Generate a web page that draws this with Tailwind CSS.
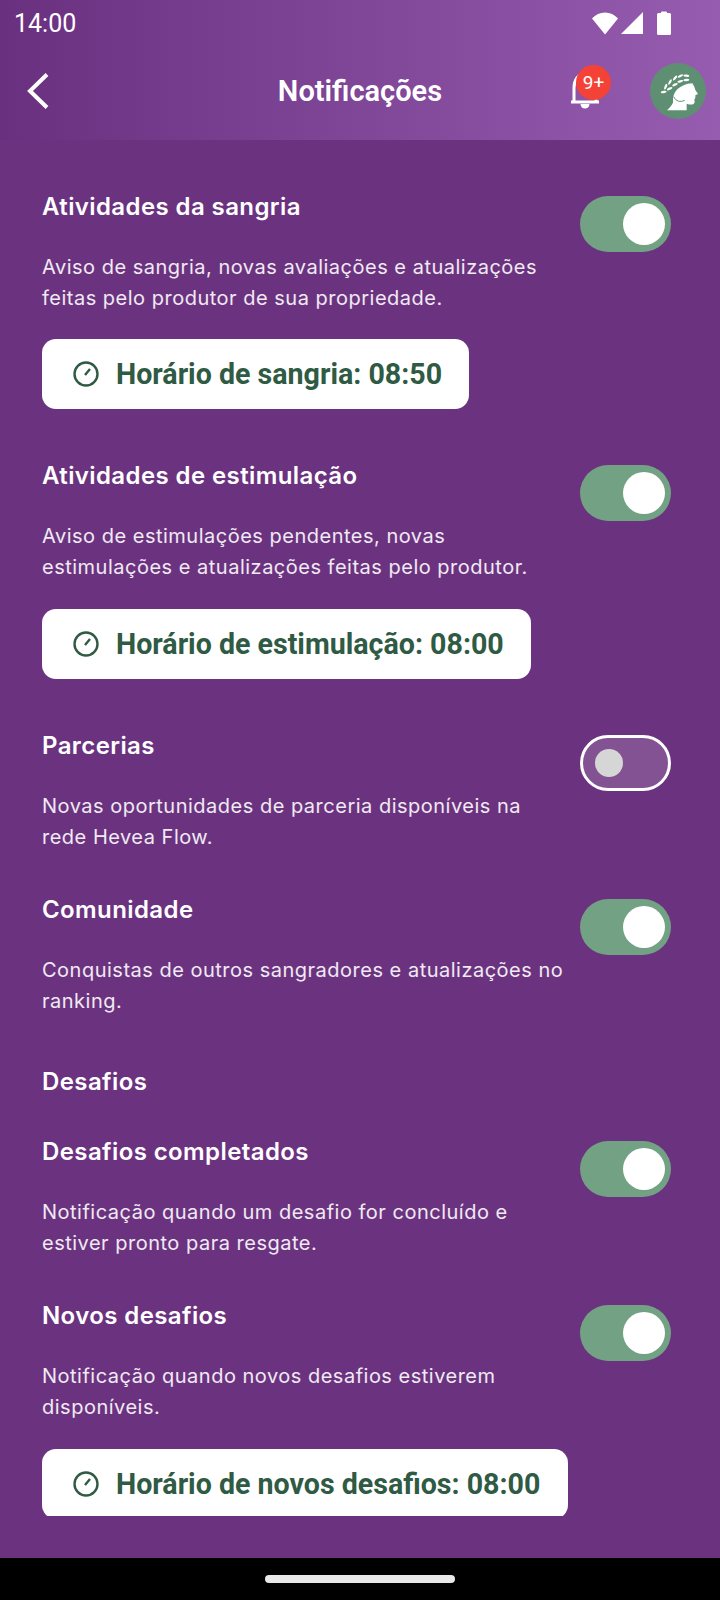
<!DOCTYPE html>
<html lang="pt-BR">
<head>
    <meta charset="UTF-8">
    <meta name="viewport" content="width=device-width, initial-scale=1.0">
    <title>Notificações</title>
    <script src="https://cdn.jsdelivr.net/npm/@tailwindcss/browser@4"></script>
</head>
<body class="bg-black">
<div class="w-[720px] h-[1600px] flex flex-col bg-black text-white font-['Inter',sans-serif] overflow-hidden">
    <!-- app bar -->
    <header class="h-[140px] shrink-0 bg-gradient-to-r from-[#6a3080] to-[#965cb0] font-['Roboto',sans-serif]">
        <div class="h-[46px] pl-[14px] pr-[49px] flex items-center justify-between">
            <span class="text-[25px] leading-none font-normal">14:00</span>
            <div class="flex items-center gap-[3px]">
                <svg width="26" height="23" viewBox="0 0 26 23"><path d="M0 6.5C3.500 2.500 8 0.500 13 0.500S22.500 2.500 26 6.500L13 22.500Z" fill="#fff"/></svg>
                <svg width="22" height="22" viewBox="0 0 22 22"><path d="M22 0V22H0Z" fill="#fff"/></svg>
                <svg width="14" height="24" viewBox="0 0 14 24" class="ml-[11px]"><path d="M4 2V1.500Q4 0.500 5 0.500H9Q10 0.500 10 1.500V2H12.500Q14 2 14 3.500V22.500Q14 24 12.500 24H1.500Q0 24 0 22.500V3.500Q0 2 1.500 2Z" fill="#fff"/></svg>
            </div>
        </div>
        <div class="h-[90px] relative flex items-center justify-center">
            <svg class="absolute left-[26px] top-[26px]" width="24" height="38" viewBox="0 0 24 38"><path d="M21 2.500L4 19L21 35.500" fill="none" stroke="#fff" stroke-width="4"/></svg>
            <h1 class="text-[29px] leading-none font-semibold">Notificações</h1>
            <div class="absolute left-[566px] top-[16px] w-[50px] h-[50px]">
                <svg class="absolute left-[2px] top-[8px]" width="34" height="40" viewBox="0 0 34 40"><path d="M3 32H31M6 32V18C6 10 10 4 17 4S28 10 28 18V32" fill="none" stroke="#fff" stroke-width="3"/><path d="M12.500 34H21.500C21.500 40 12.500 40 12.500 34Z" fill="#fff"/></svg>
                <div class="absolute left-[10px] top-[3px] w-[35px] h-[35px] rounded-full bg-[#f44336] flex items-center justify-center text-[19px] leading-none font-normal">9+</div>
            </div>
            <div class="absolute left-[650px] top-[17px] w-[56px] h-[56px] rounded-full bg-[#5f8f72]">
                <svg width="56" height="56" viewBox="15 15 168 168">
                    <path d="M92 100C102 86 125 76 142 76L148 86L151 96L159 108L151 112L151 120L148 124L149 132C147 141 138 141 125 137L125 157L66 157C77 146 87 136 84 126C83 118 87 108 92 100Z" fill="#fff"/>
                    <path d="M86 116C94 131 105 133 119 127" fill="none" stroke="#5f8f72" stroke-width="3"/>
                    <g fill="#fff">
                        <ellipse cx="56" cy="102" rx="9" ry="3.500" transform="rotate(-10 56 102)"/>
                        <ellipse cx="62" cy="86" rx="9" ry="3.500" transform="rotate(-65 62 86)"/>
                        <ellipse cx="74" cy="92" rx="9" ry="3.500" transform="rotate(-25 74 92)"/>
                        <ellipse cx="75" cy="72" rx="9" ry="3.500" transform="rotate(-60 75 72)"/>
                        <ellipse cx="90" cy="80" rx="9" ry="3.500" transform="rotate(-25 90 80)"/>
                        <ellipse cx="90" cy="60" rx="9" ry="3.500" transform="rotate(-50 90 60)"/>
                        <ellipse cx="106" cy="70" rx="9" ry="3.500" transform="rotate(-15 106 70)"/>
                        <ellipse cx="106" cy="54" rx="9" ry="3.500" transform="rotate(-25 106 54)"/>
                        <ellipse cx="124" cy="66" rx="9" ry="3.500" transform="rotate(-5 124 66)"/>
                        <ellipse cx="124" cy="53" rx="9" ry="3.500" transform="rotate(5 124 53)"/>
                    </g>
                </svg>
            </div>
        </div>
    </header>

    <main class="h-[1418px] shrink-0 bg-[#6b3280]">
        <div class="h-[1376px] overflow-hidden pl-[42px] pr-[49px] pt-[52px]">
            <!-- Atividades da sangria -->
            <section class="flex justify-between items-start">
                <div class="w-[525px]">
                    <h2 class="mt-[1px] text-[24px] leading-[28px] font-semibold tracking-[0.4px]">Atividades da sangria</h2>
                    <p class="mt-[31px] text-[20px] leading-[31px] tracking-[0.5px] text-white/90">Aviso de sangria, novas avaliações e atualizações feitas pelo produtor de sua propriedade.</p>
                </div>
                <div class="mt-[4px] w-[91px] h-[56px] rounded-full bg-[#72a283] flex items-center justify-end pr-[6px]"><span class="w-[42px] h-[42px] rounded-full bg-white"></span></div>
            </section>
            <div class="mt-[25px] w-[427px] h-[70px] rounded-[14px] bg-white flex items-center pl-[31px] gap-[17px] font-['Roboto',sans-serif] text-[#2f5a43] text-[28.6px] leading-none font-bold">
                <svg width="26" height="26" viewBox="0 0 26 26" fill="none" stroke="#2f5a43" stroke-width="2.400"><circle cx="13" cy="13" r="11.500"/><path d="M12 14L17 8"/></svg>
                <span>Horário de sangria: 08:50</span>
            </div>

            <!-- Atividades de estimulação -->
            <section class="mt-[52px] flex justify-between items-start">
                <div class="w-[525px]">
                    <h2 class="mt-[1px] text-[24px] leading-[28px] font-semibold tracking-[0.4px]">Atividades de estimulação</h2>
                    <p class="mt-[31px] text-[20px] leading-[31px] tracking-[0.5px] text-white/90">Aviso de estimulações pendentes, novas estimulações e atualizações feitas pelo produtor.</p>
                </div>
                <div class="mt-[4px] w-[91px] h-[56px] rounded-full bg-[#72a283] flex items-center justify-end pr-[6px]"><span class="w-[42px] h-[42px] rounded-full bg-white"></span></div>
            </section>
            <div class="mt-[26px] w-[489px] h-[70px] rounded-[14px] bg-white flex items-center pl-[31px] gap-[17px] font-['Roboto',sans-serif] text-[#2f5a43] text-[28.6px] leading-none font-bold">
                <svg width="26" height="26" viewBox="0 0 26 26" fill="none" stroke="#2f5a43" stroke-width="2.400"><circle cx="13" cy="13" r="11.500"/><path d="M12 14L17 8"/></svg>
                <span>Horário de estimulação: 08:00</span>
            </div>

            <!-- Parcerias -->
            <section class="mt-[52px] flex justify-between items-start">
                <div class="w-[525px]">
                    <h2 class="mt-[1px] text-[24px] leading-[28px] font-semibold tracking-[0.4px]">Parcerias</h2>
                    <p class="mt-[31px] text-[20px] leading-[31px] tracking-[0.5px] text-white/90">Novas oportunidades de parceria disponíveis na rede Hevea Flow.</p>
                </div>
                <div class="mt-[4px] w-[91px] h-[56px] rounded-full bg-[#835292] border-[3px] border-white flex items-center pl-[12px]"><span class="w-[28px] h-[28px] rounded-full bg-[#d6d6d6]"></span></div>
            </section>

            <!-- Comunidade -->
            <section class="mt-[42px] flex justify-between items-start">
                <div class="w-[525px]">
                    <h2 class="mt-[1px] text-[24px] leading-[28px] font-semibold tracking-[0.4px]">Comunidade</h2>
                    <p class="mt-[31px] text-[20px] leading-[31px] tracking-[0.5px] text-white/90">Conquistas de outros sangradores e atualizações no ranking.</p>
                </div>
                <div class="mt-[4px] w-[91px] h-[56px] rounded-full bg-[#72a283] flex items-center justify-end pr-[6px]"><span class="w-[42px] h-[42px] rounded-full bg-white"></span></div>
            </section>

            <h2 class="mt-[51px] text-[24px] leading-[28px] font-semibold tracking-[0.4px]">Desafios</h2>

            <!-- Desafios completados -->
            <section class="mt-[41px] flex justify-between items-start">
                <div class="w-[525px]">
                    <h2 class="mt-[1px] text-[24px] leading-[28px] font-semibold tracking-[0.4px]">Desafios completados</h2>
                    <p class="mt-[31px] text-[20px] leading-[31px] tracking-[0.5px] text-white/90">Notificação quando um desafio for concluído e estiver pronto para resgate.</p>
                </div>
                <div class="mt-[4px] w-[91px] h-[56px] rounded-full bg-[#72a283] flex items-center justify-end pr-[6px]"><span class="w-[42px] h-[42px] rounded-full bg-white"></span></div>
            </section>

            <!-- Novos desafios -->
            <section class="mt-[42px] flex justify-between items-start">
                <div class="w-[525px]">
                    <h2 class="mt-[1px] text-[24px] leading-[28px] font-semibold tracking-[0.4px]">Novos desafios</h2>
                    <p class="mt-[31px] text-[20px] leading-[31px] tracking-[0.5px] text-white/90">Notificação quando novos desafios estiverem disponíveis.</p>
                </div>
                <div class="mt-[4px] w-[91px] h-[56px] rounded-full bg-[#72a283] flex items-center justify-end pr-[6px]"><span class="w-[42px] h-[42px] rounded-full bg-white"></span></div>
            </section>
            <div class="mt-[26px] w-[526px] h-[70px] rounded-[14px] bg-white flex items-center pl-[31px] gap-[17px] font-['Roboto',sans-serif] text-[#2f5a43] text-[28.6px] leading-none font-bold">
                <svg width="26" height="26" viewBox="0 0 26 26" fill="none" stroke="#2f5a43" stroke-width="2.400"><circle cx="13" cy="13" r="11.500"/><path d="M12 14L17 8"/></svg>
                <span>Horário de novos desafios: 08:00</span>
            </div>
        </div>
    </main>

    <footer class="flex-1 flex justify-center pt-[17px]">
        <div class="w-[190px] h-[8px] rounded-full bg-[#e8e8e8]"></div>
    </footer>
</div>
</body>
</html>
